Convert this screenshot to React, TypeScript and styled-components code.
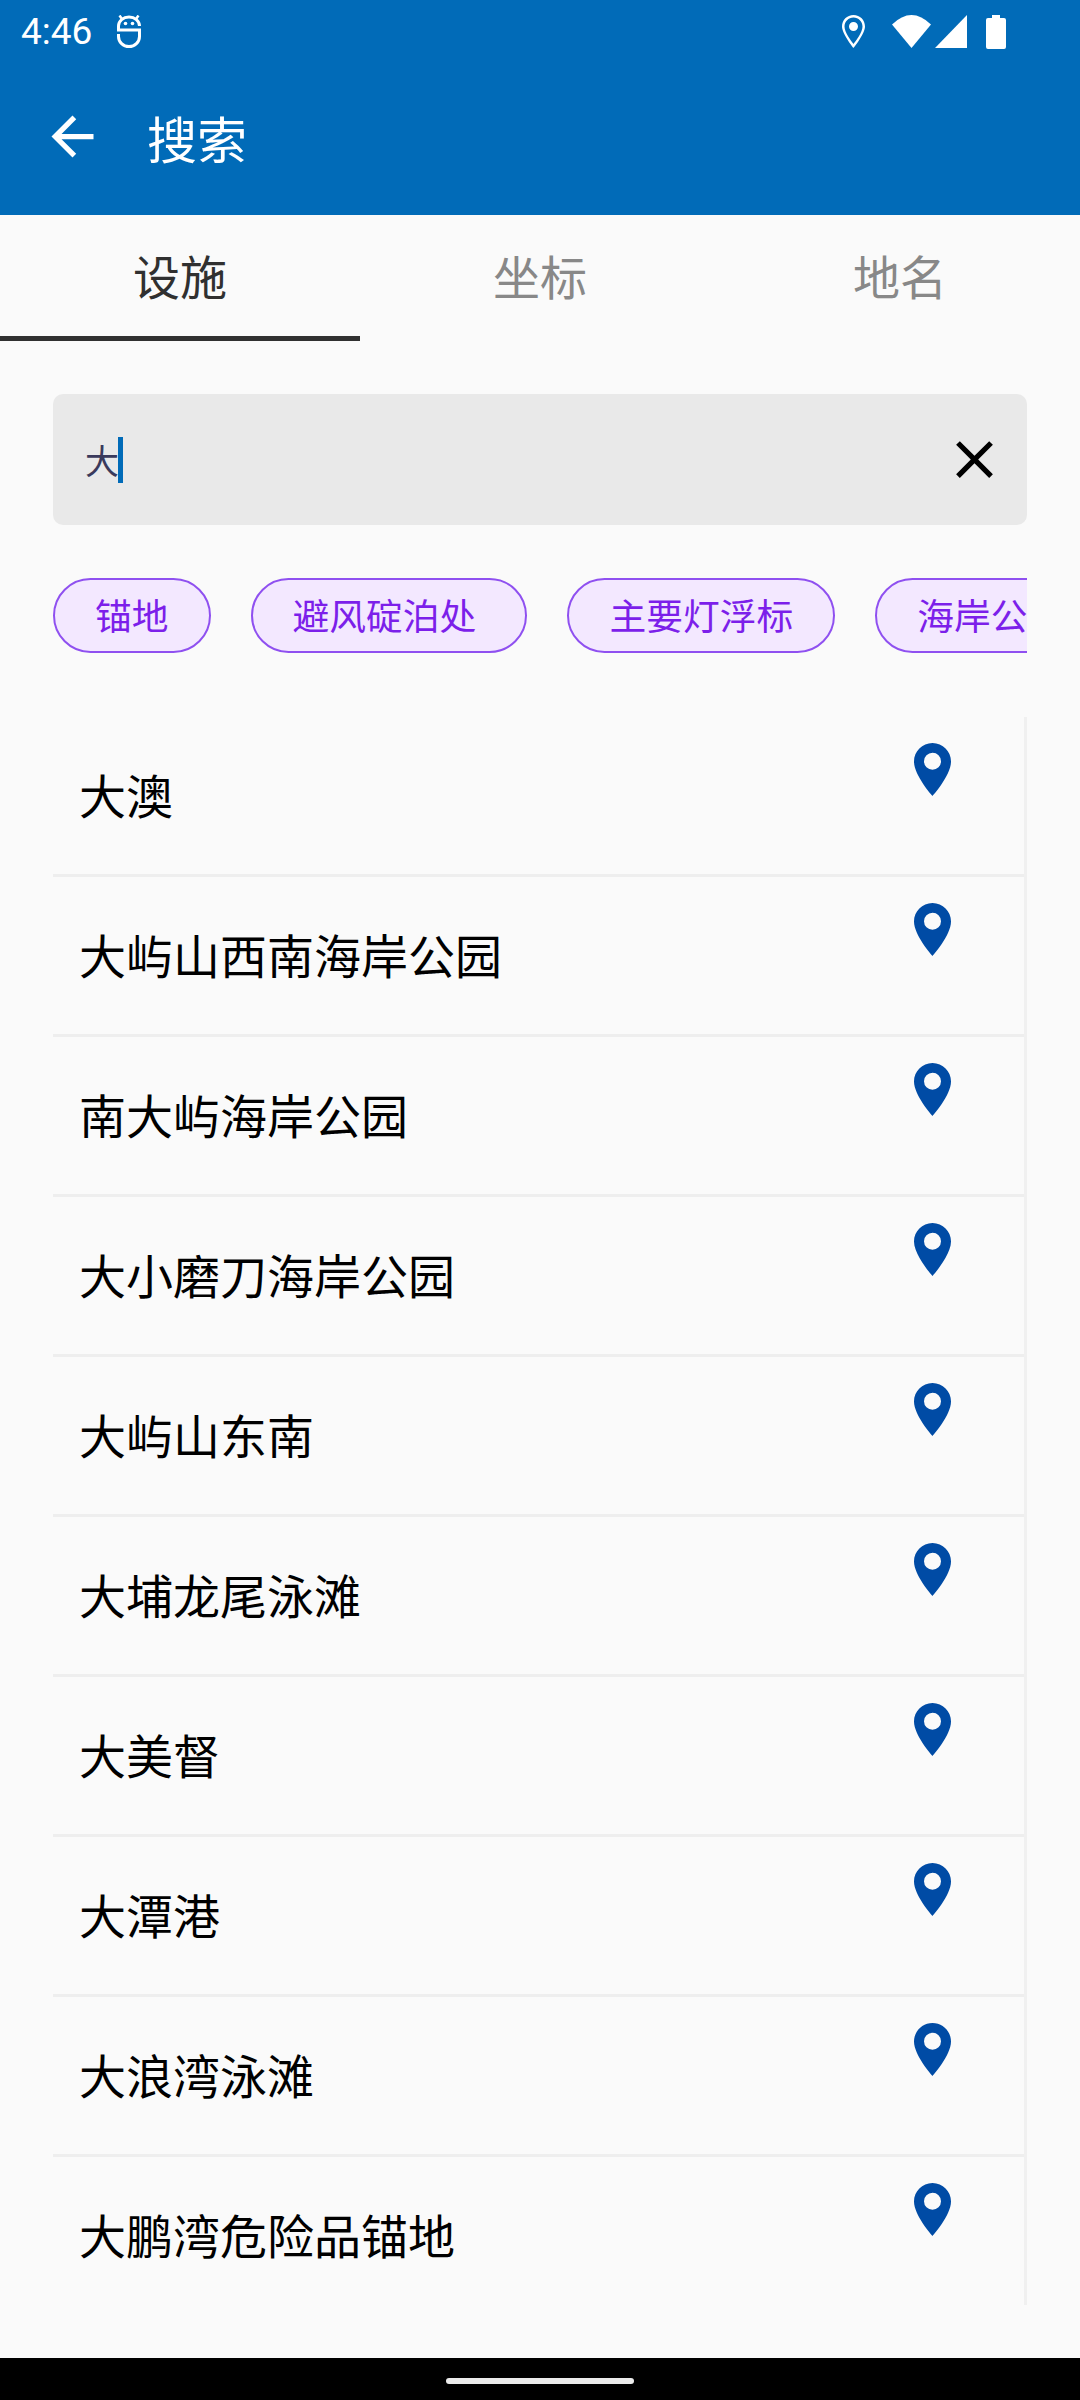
import React from 'react';
import styled, { createGlobalStyle } from 'styled-components';

const Global = createGlobalStyle`
  html, body { margin: 0; padding: 0; background: #fafafa; }
  * { box-sizing: border-box; }
  body { font-family: "Noto Sans CJK SC", "Noto Sans", sans-serif; }
`;
const Page = styled.div`
  width: 1080px; height: 2400px; display: flex; flex-direction: column; background: #fafafa; overflow: hidden;
`;
const AppBar = styled.header`
  height: 215px; flex-shrink: 0; background: #016bb8; color: #fff; display: flex; flex-direction: column;
`;
const StatusBar = styled.div`
  height: 63px; display: flex; align-items: center; padding: 0 74px 0 21px;
`;
const Clock = styled.span`
  font-family: Roboto, sans-serif; font-size: 37px; line-height: 1; margin-right: 25px;
`;
const StatusRight = styled.div`
  margin-left: auto; display: flex; align-items: center;
`;
const StatusIcon = styled.svg<{ $gap?: number }>`
  display: block; fill: #fff; margin-left: ${p => p.$gap ?? 0}px;
`;
const RobotIcon = styled.svg`
  display: block; fill: none; stroke: #fff; stroke-width: 3;
`;
const TitleRow = styled.div`
  flex: 1; display: flex; align-items: center; padding: 0 0 5px 41px;
`;
const Title = styled.h1`
  margin: 0 0 0 43px; font-size: 50px; font-weight: 400; line-height: 1;
`;
const Tabs = styled.nav`
  height: 126px; flex-shrink: 0; display: grid; grid-template-columns: repeat(3, 1fr);
`;
const Tab = styled.div<{ $active?: boolean }>`
  display: flex; align-items: center; justify-content: center; padding-bottom: 2px; font-size: 47px;
  color: ${p => (p.$active ? '#303030' : '#888888')};
  border-bottom: 5px solid ${p => (p.$active ? '#303030' : 'transparent')};
`;
const Body = styled.main`
  flex: 1; display: flex; flex-direction: column; padding: 53px 53px 0; min-height: 0;
`;
const SearchBox = styled.div`
  height: 131px; flex-shrink: 0; background: #e9e9e9; border-radius: 10px; display: flex; align-items: center; padding: 0 21px 0 32px;
`;
const SearchText = styled.span`
  font-size: 34px; line-height: 1; color: #3a3a5c;
`;
const Caret = styled.span`
  width: 5px; height: 46px; background: #016bb8; margin-left: -1px;
`;
const ClearIcon = styled.svg`
  display: block; margin-left: auto; fill: #000;
`;
const ChipRow = styled.div`
  display: flex; gap: 40px; margin-top: 53px; height: 75px; flex-shrink: 0; overflow: hidden;
`;
const Chip = styled.span`
  flex-shrink: 0; height: 75px; display: flex; align-items: center; padding: 0 40px 2px; border: 2px solid #8f50f0; border-radius: 38px;
  background: #f3e8ff; color: #7c1fea; font-size: 36.750px; line-height: 1; white-space: pre;
`;
const List = styled.ul`
  list-style: none; margin: 64px 0 0; padding: 0; height: 1588px; flex-shrink: 0; overflow: hidden; border-right: 3px solid #f0f0f0;
`;
const Row = styled.li`
  height: 160px; display: flex; align-items: flex-start; justify-content: space-between; padding: 26px 73px 0 26px; border-bottom: 3px solid #eeeeee;
`;
const RowText = styled.span`
  font-size: 47px; line-height: 1; color: #000; margin-top: 27px;
`;
const Pin = styled.svg`
  display: block; fill: #004ba5; flex-shrink: 0;
`;
const NavBar = styled.div`
  margin-top: auto; height: 42px; flex-shrink: 0; background: #000; display: flex; justify-content: center; padding-top: 20px;
`;
const HomeBar = styled.span`
  width: 188px; height: 6px; border-radius: 3px; background: #ebebeb;
`;

const places = ['大澳', '大屿山西南海岸公园', '南大屿海岸公园', '大小磨刀海岸公园', '大屿山东南', '大埔龙尾泳滩', '大美督', '大潭港', '大浪湾泳滩', '大鹏湾危险品锚地'];
const chips = ['锚地', '避风碇泊处\u2005', '主要灯浮标', '海岸公园'];

export default function App() {
  return (
    <Page>
      <Global />
      <AppBar>
        <StatusBar>
          <Clock>4:46</Clock>
          <RobotIcon width="24" height="33" viewBox="0 0 24 33">
            <path d="M22.500 11A10.500 9 0 0 0 1.500 11V15H22.500V21.500A10.500 10 0 0 1 1.500 21.500V19" />
            <path d="M2.500 0.500 5 4M21.500 0.500 19 4" strokeWidth="2.500" />
            <circle cx="8.500" cy="8.500" r="1.800" fill="#fff" stroke="none" />
            <circle cx="15.500" cy="8.500" r="1.800" fill="#fff" stroke="none" />
          </RobotIcon>
          <StatusRight>
            <StatusIcon width="23" height="33" viewBox="0 0 23 33">
              <path fillRule="evenodd" d="M11.500 0C5 0 0 5 0 11.500 0 19 11.500 33 11.500 33S23 19 23 11.500C23 5 18 0 11.500 0zm0 2.500c5 0 9 4 9 9 0 5.500-6.500 14.500-9 17.500-2.500-3-9-12-9-17.500 0-5 4-9 9-9zm0 4.500a4.500 4.500 0 1 0 0 9 4.500 4.500 0 0 0 0-9z" />
            </StatusIcon>
            <StatusIcon $gap={27} width="39" height="33" viewBox="0 0 39 33">
              <path d="M0 9.500Q19.500-9.500 39 9.500L19.500 33z" />
            </StatusIcon>
            <StatusIcon $gap={4} width="32" height="33" viewBox="0 0 32 33">
              <path d="M32 0v33H0z" />
            </StatusIcon>
            <StatusIcon $gap={19} width="20" height="34" viewBox="0 0 20 34">
              <path d="M6 0h8v3h4a2 2 0 0 1 2 2v27a2 2 0 0 1-2 2H2a2 2 0 0 1-2-2V5a2 2 0 0 1 2-2h4z" />
            </StatusIcon>
          </StatusRight>
        </StatusBar>
        <TitleRow>
          <StatusIcon width="63" height="63" viewBox="0 0 24 24">
            <path d="M20 11H7.830l5.590-5.590L12 4l-8 8 8 8 1.410-1.410L7.830 13H20v-2z" />
          </StatusIcon>
          <Title>搜索</Title>
        </TitleRow>
      </AppBar>
      <Tabs>
        <Tab $active>设施</Tab>
        <Tab>坐标</Tab>
        <Tab>地名</Tab>
      </Tabs>
      <Body>
        <SearchBox>
          <SearchText>大</SearchText>
          <Caret />
          <ClearIcon width="63" height="63" viewBox="0 0 24 24">
            <path d="M19 6.410 17.590 5 12 10.590 6.410 5 5 6.410 10.590 12 5 17.590 6.410 19 12 13.410 17.590 19 19 17.590 13.410 12z" />
          </ClearIcon>
        </SearchBox>
        <ChipRow>
          {chips.map(c => <Chip key={c}>{c}</Chip>)}
        </ChipRow>
        <List>
          {places.map(p => (
            <Row key={p}>
              <RowText>{p}</RowText>
              <Pin width="37" height="53" viewBox="0 0 37 53">
                <path fillRule="evenodd" d="M18.500 0C8.300 0 0 8.300 0 18.500 0 32.400 18.500 53 18.500 53S37 32.400 37 18.500C37 8.300 28.700 0 18.500 0zm0 9.800a8.500 8.500 0 1 1 0 17 8.500 8.500 0 0 1 0-17z" />
              </Pin>
            </Row>
          ))}
        </List>
      </Body>
      <NavBar><HomeBar /></NavBar>
    </Page>
  );
}
